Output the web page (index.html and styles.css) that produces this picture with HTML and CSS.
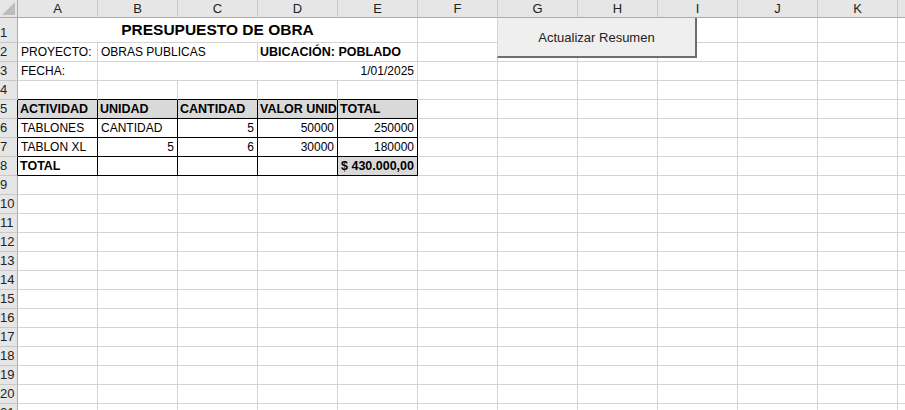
FILE: index.html
```html
<!DOCTYPE html>
<html lang="es">
<head>
    <meta charset="UTF-8">
    <meta name="viewport" content="width=device-width, initial-scale=1.0">
    <title>Presupuesto de Obra</title>
    <link rel="stylesheet" href="styles.css">
</head>
<body>
    <div class="hoja">
        <div id="grid" class="grid"></div>
        <button class="btn-resumen">Actualizar Resumen</button>
    </div>
    <script>
        const columnas = ["A", "B", "C", "D", "E", "F", "G", "H", "I", "J", "K", "L"]
        const totalFilas = 21

        const celdas = {
            A1: { texto: "PRESUPUESTO DE OBRA", span: 5, clase: "titulo" },
            A2: { texto: "PROYECTO:" },
            B2: { texto: "OBRAS PUBLICAS", span: 2 },
            D2: { texto: "UBICACIÓN: POBLADO", span: 2, clase: "negrita" },
            A3: { texto: "FECHA:" },
            B3: { texto: "1/01/2025", span: 4, clase: "num" },
            A5: { texto: "ACTIVIDAD", clase: "negrita" },
            B5: { texto: "UNIDAD", clase: "negrita" },
            C5: { texto: "CANTIDAD", clase: "negrita" },
            D5: { texto: "VALOR UNID", clase: "negrita" },
            E5: { texto: "TOTAL", clase: "negrita" },
            A6: { texto: "TABLONES" },
            B6: { texto: "CANTIDAD" },
            C6: { texto: "5", clase: "num" },
            D6: { texto: "50000", clase: "num" },
            E6: { texto: "250000", clase: "num" },
            A7: { texto: "TABLON XL" },
            B7: { texto: "5", clase: "num" },
            C7: { texto: "6", clase: "num" },
            D7: { texto: "30000", clase: "num" },
            E7: { texto: "180000", clase: "num" },
            A8: { texto: "TOTAL", clase: "negrita" },
            E8: { texto: "$ 430.000,00", clase: "negrita num relleno" }
        }

        function dibujarHoja() {
            const grid = document.getElementById("grid")

            const esquina = document.createElement("div")
            esquina.className = "esquina"
            esquina.innerHTML = '<svg width="13" height="13" viewBox="0 0 13 13"><polygon points="13,0 13,13 0,13" fill="#bdbdbd"/></svg>'
            grid.appendChild(esquina)

            columnas.forEach(col => {
                const cab = document.createElement("div")
                cab.className = "col-header"
                cab.textContent = col
                grid.appendChild(cab)
            })

            for (let f = 1; f <= totalFilas; f++) {
                const num = document.createElement("div")
                num.className = "fila-header"
                if (f >= 5 && f <= 8) num.classList.add("borde-negro")
                num.textContent = f
                grid.appendChild(num)

                let i = 0
                while (i < columnas.length) {
                    const ref = columnas[i] + f
                    const dato = celdas[ref] || {}
                    const span = dato.span || 1
                    const celda = document.createElement("div")

                    celda.className = "celda " + (dato.clase || "")
                    if (span > 1) celda.style.gridColumn = "span " + span
                    if (f >= 5 && f <= 8 && i < 5) celda.classList.add("tabla")
                    if (f === 4 && i < 5) celda.classList.add("borde-abajo")
                    if (f === 5 && i < 5) celda.classList.add("relleno")

                    celda.textContent = dato.texto || ""
                    grid.appendChild(celda)
                    i += span
                }
            }
        }

        dibujarHoja()
    </script>
</body>
</html>
```

FILE: styles.css
```css
body {
    margin: 0;
    background: #fff;
    font-family: "Liberation Sans", Arial, sans-serif;
}

.hoja {
    position: relative;
    width: 905px;
    height: 410px;
    overflow: hidden;
}

.grid {
    display: grid;
    grid-template-columns: 18px repeat(12, 80px);
    grid-template-rows: 18px 25px repeat(20, 19px);
}

.grid > div {
    box-sizing: border-box;
    border-right: 1px solid #d4d4d4;
    border-bottom: 1px solid #d4d4d4;
    overflow: hidden;
    white-space: nowrap;
    display: flex;
    align-items: flex-end;
}

.esquina {
    background: #e6e6e6;
    padding: 0 2px 2px 0;
    justify-content: flex-end;
    border-right-color: #ababab !important;
    border-bottom-color: #ababab !important;
}

.col-header {
    background: #e6e6e6;
    justify-content: center;
    align-items: center !important;
    font-size: 13px;
    color: #222;
    border-right-color: #c8c8c8 !important;
    border-bottom-color: #ababab !important;
}

.fila-header {
    background: #e6e6e6;
    font-size: 13px;
    color: #222;
    padding: 0 0 2px 0;
    overflow: visible !important;
    border-right-color: #ababab !important;
    border-bottom-color: #c8c8c8 !important;
}

.fila-header.borde-negro {
    border-right-color: #000 !important;
}

.celda {
    font-size: 12px;
    color: #000;
    padding: 0 3px 2px 3px;
}

.num {
    justify-content: flex-end;
}

.negrita {
    font-weight: bold;
    font-size: 12.5px;
    padding-left: 2px;
    padding-bottom: 2px;
}

.titulo {
    justify-content: center;
    font-weight: bold;
    font-size: 15.5px;
    padding-bottom: 3px;
}

.tabla {
    border-right-color: #000 !important;
    border-bottom-color: #000 !important;
}

.borde-abajo {
    border-bottom-color: #000 !important;
}

.relleno {
    background: #d9d9d9;
}

.btn-resumen {
    position: absolute;
    left: 497px;
    top: 18px;
    width: 200px;
    height: 40px;
    box-sizing: border-box;
    background: #efefef;
    border: none;
    border-left: 1px solid #d4d4d4;
    border-right: 2px solid #6e6e6e;
    border-bottom: 2px solid #6e6e6e;
    font-family: "Liberation Sans", Arial, sans-serif;
    font-size: 13px;
    color: #222;
    padding: 0;
}
```
